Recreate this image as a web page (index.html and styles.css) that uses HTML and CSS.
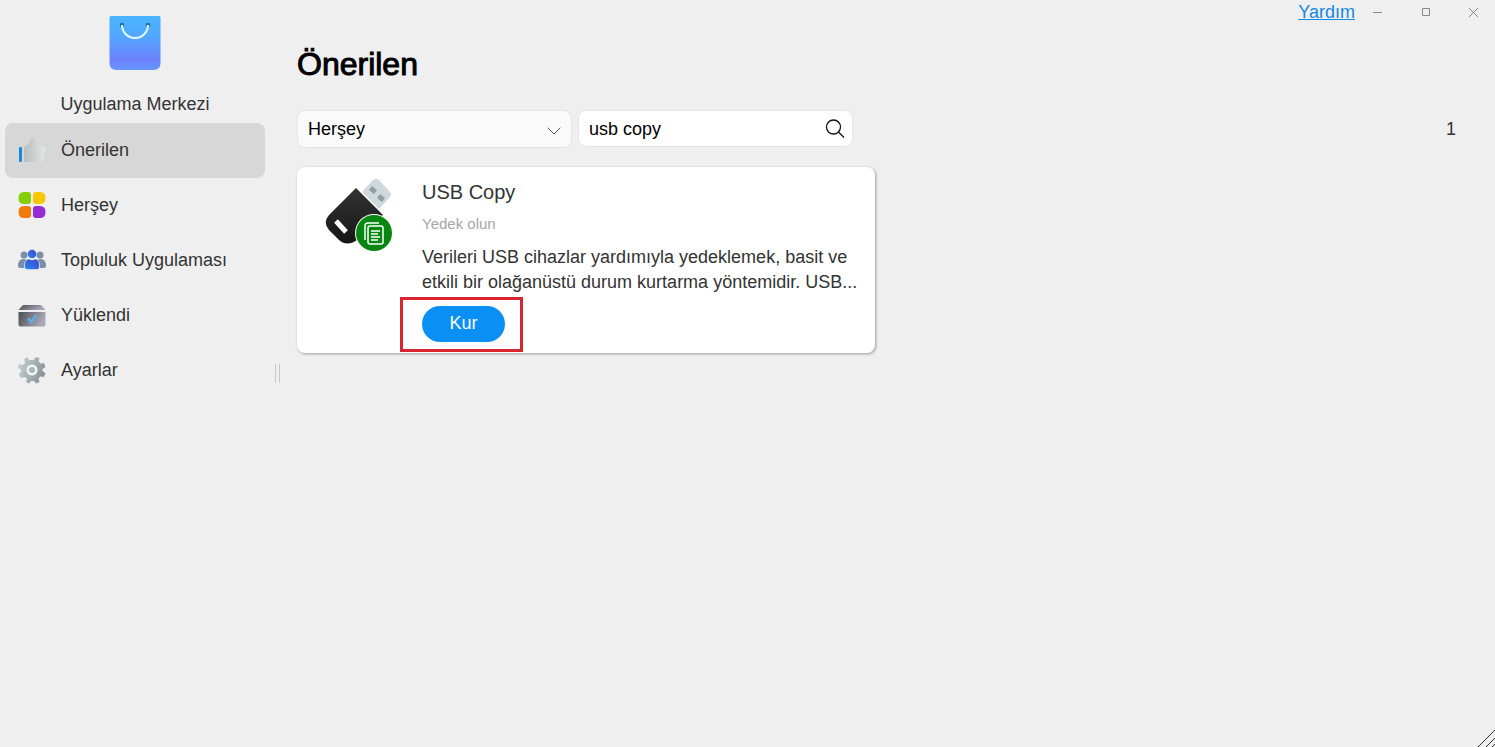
FILE: index.html
```html
<!DOCTYPE html>
<html lang="tr">
<head>
    <meta charset="UTF-8">
    <meta name="viewport" content="width=device-width, initial-scale=1.0">
    <title>Uygulama Merkezi</title>
    <link rel="stylesheet" href="styles.css">
</head>
<body>
    <div class="window">
        <aside class="sidebar">
            <div class="brand">
                <svg class="brand-logo" viewBox="0 0 52 54" aria-hidden="true">
                    <defs>
                        <linearGradient id="bag" x1="0" y1="0" x2="0" y2="1">
                            <stop offset="0" stop-color="#49b3ff"/>
                            <stop offset="0.35" stop-color="#50a9ff"/>
                            <stop offset="0.8" stop-color="#6c82fd"/>
                            <stop offset="1" stop-color="#6696ff"/>
                        </linearGradient>
                    </defs>
                    <path d="M2 0h48q1.500 0 1.500 1.500V47q0 7-7 7h-37q-7 0-7-7V1.500Q.5 0 2 0z" fill="url(#bag)"/>
                    <circle cx="13" cy="9" r="2.200" fill="#1b7195"/>
                    <circle cx="39" cy="9" r="2.200" fill="#1b7195"/>
                    <path d="M13 9a13 13 0 0 0 26 0" fill="none" stroke="#e6fbff" stroke-width="2"/>
                </svg>
                <span>Uygulama Merkezi</span>
            </div>
            <nav class="menu">
                <a href="#" class="menu-item active">
                    <svg class="menu-icon" viewBox="0 0 28 28" aria-hidden="true">
                        <defs>
                            <linearGradient id="thumb">
                                <stop offset="0" stop-color="#b7bfc1"/>
                                <stop offset="1" stop-color="#e2e5e5"/>
                            </linearGradient>
                        </defs>
                        <rect x="1" y="11" width="3" height="15" rx="1" fill="#1689d8"/>
                        <path d="M6 12q0-2 2-2.500c3-1 3.500-2.500 4-5.500.6-4.500 6-4 6 .5v5.500h6.500q3 0 2.800 3l-1.800 10.500q-.5 2.500-2.500 2.500H6z" fill="url(#thumb)"/>
                    </svg>
                    Önerilen
                </a>
                <a href="#" class="menu-item">
                    <svg class="menu-icon" viewBox="0 0 28 28" aria-hidden="true">
                        <path d="M6 1h4q3 0 3 3v6q0 3-3 3H6q-5.500 0-5.500-6T6 1z" fill="#84cf08"/>
                        <path d="M18 1h4q5.500 0 5.500 6T22 13h-4q-3 0-3-3V4q0-3 3-3z" fill="#f7c800"/>
                        <path d="M6 15h4q3 0 3 3v6q0 3-3 3H6q-5.500 0-5.500-6T6 15z" fill="#f27a0c"/>
                        <path d="M18 15h4q5.500 0 5.500 6T22 27h-4q-3 0-3-3v-6q0-3 3-3z" fill="#982bd1"/>
                    </svg>
                    Herşey
                </a>
                <a href="#" class="menu-item">
                    <svg class="menu-icon" viewBox="0 0 28 28" aria-hidden="true">
                        <defs>
                            <linearGradient id="people" x1="0" y1="1" x2="1" y2="0">
                                <stop offset="0" stop-color="#2b8de8"/>
                                <stop offset="0.5" stop-color="#3564dd"/>
                                <stop offset="1" stop-color="#3a48c6"/>
                            </linearGradient>
                        </defs>
                        <g fill="#7d8fa7">
                            <circle cx="6" cy="9" r="3.500"/>
                            <circle cx="22" cy="9" r="3.500"/>
                            <path d="M0 20c0-5 2-7 6-7l3 1c-2 2-3 4-3 8H2q-2 0-2-2zM28 20c0-5-2-7-6-7l-3 1c2 2 3 4 3 8h4q2 0 2-2z"/>
                        </g>
                        <circle cx="14" cy="8" r="4.300" fill="url(#people)"/>
                        <path d="M6.500 21c0-6 2-8 4.500-8q3 2 6 0c2.500 0 4.500 2 4.500 8q0 2.500-3 2.500h-9q-3 0-3-2.500z" fill="url(#people)" stroke="#efefef" stroke-width="0.6"/>
                    </svg>
                    Topluluk Uygulaması
                </a>
                <a href="#" class="menu-item">
                    <svg class="menu-icon" viewBox="0 0 28 28" aria-hidden="true">
                        <defs>
                            <linearGradient id="box" x1="0" y1="0" x2="1" y2="0.3">
                                <stop offset="0" stop-color="#4b4b50"/>
                                <stop offset="1" stop-color="#aaa9b9"/>
                            </linearGradient>
                        </defs>
                        <path d="M6 4h16q1 0 2 1l3.500 4H.5L4 5q1-1 2-1z" fill="url(#box)"/>
                        <path d="M.5 11h27v12.500q0 2-2 2h-23q-2 0-2-2z" fill="url(#box)"/>
                        <path d="M10 17.500l3.500 3.500 4.500-7" fill="none" stroke="#5eaee9" stroke-width="2.500"/>
                    </svg>
                    Yüklendi
                </a>
                <a href="#" class="menu-item">
                    <svg class="menu-icon" viewBox="0 0 28 28" aria-hidden="true">
                        <defs>
                            <linearGradient id="gear" x1="0" y1="0" x2="1" y2="0.4">
                                <stop offset="0" stop-color="#c9d5d5"/>
                                <stop offset="1" stop-color="#8b979b"/>
                            </linearGradient>
                        </defs>
                        <path d="M11 4 9.500 1 6 3l1 4-2 2-4-1-1 4 3 1.500v2L1 18l2 4 4-1 2 2-1 3 3 1.500 2-2.500h3l2 2.500 3.500-1.500-1-3.500 2-2 3.500.5 1.500-4-3-2v-2l3-2-1.500-4-3.500.5-2-2 1-3.500L18 1l-2.500 3z" fill="url(#gear)"/>
                        <circle cx="14" cy="14" r="4.300" fill="#a9b6b9" stroke="#f1f4f4" stroke-width="2.500"/>
                    </svg>
                    Ayarlar
                </a>
            </nav>
        </aside>

        <div class="splitter"></div>

        <main class="content">
            <header class="topbar">
                <a href="#" class="help">Yardım</a>
                <button class="win-btn" aria-label="Simge durumuna küçült">
                    <svg viewBox="0 0 12 12"><path d="M2 6.500h9"/></svg>
                </button>
                <button class="win-btn" aria-label="Ekranı kapla">
                    <svg viewBox="0 0 12 12"><path d="M3.500 2.500h7v7h-7z"/></svg>
                </button>
                <button class="win-btn" aria-label="Kapat">
                    <svg viewBox="0 0 12 12"><path d="M2 2l9 9M11 2l-9 9"/></svg>
                </button>
            </header>

            <h1>Önerilen</h1>

            <div class="filters">
                <div class="select-box">
                    <select aria-label="Kategori">
                        <option>Herşey</option>
                    </select>
                    <svg class="chevron" viewBox="0 0 14 8" aria-hidden="true"><path d="M.7.7L7 7 13.300.7"/></svg>
                </div>
                <div class="search-box">
                    <input type="text" value="usb copy" aria-label="Ara">
                    <button class="search-btn" aria-label="Ara">
                        <svg viewBox="0 0 20 20"><circle cx="8.500" cy="8" r="7"/><path d="M13.500 13l5.500 5.500"/></svg>
                    </button>
                </div>
                <span class="count">1</span>
            </div>

            <article class="card">
                <svg class="app-icon" viewBox="0 0 72 74" aria-hidden="true">
                    <defs>
                        <linearGradient id="usb" x1="0" y1="0" x2="0" y2="1">
                            <stop offset="0" stop-color="#333"/>
                            <stop offset="1" stop-color="#161616"/>
                        </linearGradient>
                    </defs>
                    <path d="M37 13 48 1q3-2 6 0l11 12q2 2 0 5L54 30z" fill="#cfd8dd"/>
                    <path d="M47 7l5 4-3 4-5-4zM55 15l5 4-3 4-5-4z" fill="#8f9da5"/>
                    <path d="M31 9 58 36 32 61q-10 7-18 0L4 51q-7-8 1-16z" fill="url(#usb)"/>
                    <path d="M11 42 21 53" stroke="#fff" stroke-width="5"/>
                    <circle cx="49" cy="54" r="19" fill="#fff"/>
                    <circle cx="49" cy="54" r="18" fill="#078612"/>
                    <g fill="none" stroke="#fff" stroke-width="1.500">
                        <path d="M40 61V47q0-3 3-3h11"/>
                        <rect x="43" y="47" width="15" height="18" rx="2"/>
                        <path d="M46 52h9M46 55h7M46 58h9M46 61h7"/>
                    </g>
                </svg>
                <div class="card-body">
                    <h2>USB Copy</h2>
                    <p class="category">Yedek olun</p>
                    <p class="desc">Verileri USB cihazlar yardımıyla yedeklemek, basit ve etkili bir olağanüstü durum kurtarma yöntemidir. USB...</p>
                    <div class="action">
                        <button class="install-btn">Kur</button>
                    </div>
                </div>
            </article>
        </main>

        <svg class="resize-grip" viewBox="0 0 18 18" aria-hidden="true"><path d="M1 18 18 1M9 18l9-9M15 18l3-3"/></svg>
    </div>
</body>
</html>
```
FILE: styles.css
```css
:root {
    --bg-color: #efefef;
    --text-color: #333333;
    --active-bg: #d7d7d7;
    --accent: #0a90f5;
    --highlight: #d9252f;
}

* {
    margin: 0;
    padding: 0;
    box-sizing: border-box;
}

body {
    background: var(--bg-color);
    color: var(--text-color);
    font-family: "Liberation Sans", Arial, sans-serif;
    font-size: 18px;
    line-height: 24px;
}

button,
select,
input {
    font: inherit;
    border: 0;
    background: none;
}

button {
    cursor: pointer;
}

.window {
    position: relative;
    display: flex;
    min-height: 100vh;
}

/* Sidebar */
.sidebar {
    flex: 0 0 270px;
    padding: 16px 5px;
}

.brand {
    display: flex;
    flex-direction: column;
    align-items: center;
    gap: 22px;
    margin-bottom: 7px;
}

.brand-logo {
    width: 52px;
    height: 54px;
}

.menu-item {
    display: flex;
    align-items: center;
    gap: 15px;
    height: 55px;
    padding: 0 13px 2px;
    border-radius: 8px;
    color: inherit;
    text-decoration: none;
}

.menu-item.active {
    background: var(--active-bg);
}

.menu-icon {
    width: 28px;
    height: 28px;
}

.splitter {
    align-self: center;
    width: 5px;
    height: 19px;
    margin: 0 17px 0 5px;
    border: solid #c8c8c8;
    border-width: 0 1px;
}

/* Content */
.content {
    flex: 1;
    min-width: 0;
}

.topbar {
    display: flex;
    justify-content: flex-end;
    align-items: center;
    height: 24px;
    padding-right: 16px;
}

.help {
    margin-right: 16px;
    color: #1588e0;
}

.win-btn {
    width: 12px;
    height: 24px;
    margin-right: 36px;
}

.win-btn:last-child {
    margin-right: 0;
}

.win-btn svg {
    display: block;
    width: 12px;
    fill: none;
    stroke: #888888;
}

h1 {
    margin: 20px 0 26px;
    color: #000000;
    font-size: 32px;
    font-weight: 400;
    line-height: 40px;
    -webkit-text-stroke: 1px #000000;
}

.filters {
    display: flex;
    gap: 6px;
    margin-bottom: 19px;
    padding-right: 39px;
}

.select-box,
.search-box {
    position: relative;
    display: flex;
    width: 275px;
    height: 38px;
    border: 1px solid #e5e5e5;
    border-radius: 8px;
    background: #fafafa;
}

.search-box {
    height: 37px;
    background: #ffffff;
}

.select-box select,
.search-box input {
    flex: 1;
    min-width: 0;
    padding: 0 10px;
    color: #000000;
    appearance: none;
}

.chevron {
    position: absolute;
    right: 10px;
    top: 16px;
    width: 14px;
    height: 8px;
    fill: none;
    stroke: #555555;
    pointer-events: none;
}

.search-btn {
    width: 34px;
    padding: 0 7px;
}

.search-btn svg {
    display: block;
    width: 20px;
    fill: none;
    stroke: #111111;
    stroke-width: 1.3;
}

.count {
    margin-left: auto;
    line-height: 38px;
}

/* App card */
.card {
    display: flex;
    gap: 25px;
    max-width: 578px;
    padding: 12px 12px 11px 28px;
    border-radius: 8px;
    background: #ffffff;
    box-shadow: 1px 1px 3px rgba(0, 0, 0, 0.35);
}

.app-icon {
    flex: none;
    width: 72px;
    height: 74px;
}

.card-body {
    flex: 1;
}

h2 {
    font-size: 20px;
    font-weight: 400;
    line-height: 26px;
}

.category {
    margin: 7px 0 9px;
    color: #a6a6a6;
    font-size: 15px;
}

.desc {
    line-height: 25px;
}

.action {
    position: relative;
    width: 83px;
    margin-top: 11px;
}

.action::after {
    content: "";
    position: absolute;
    inset: -9px -18px -10px -22px;
    border: 3px solid var(--highlight);
    pointer-events: none;
}

.install-btn {
    display: block;
    width: 100%;
    height: 36px;
    padding-bottom: 2px;
    border-radius: 18px;
    background: var(--accent);
    color: #ffffff;
}

.resize-grip {
    position: absolute;
    right: 0;
    bottom: 0;
    width: 18px;
    height: 18px;
    fill: none;
    stroke: #333333;
}
```
